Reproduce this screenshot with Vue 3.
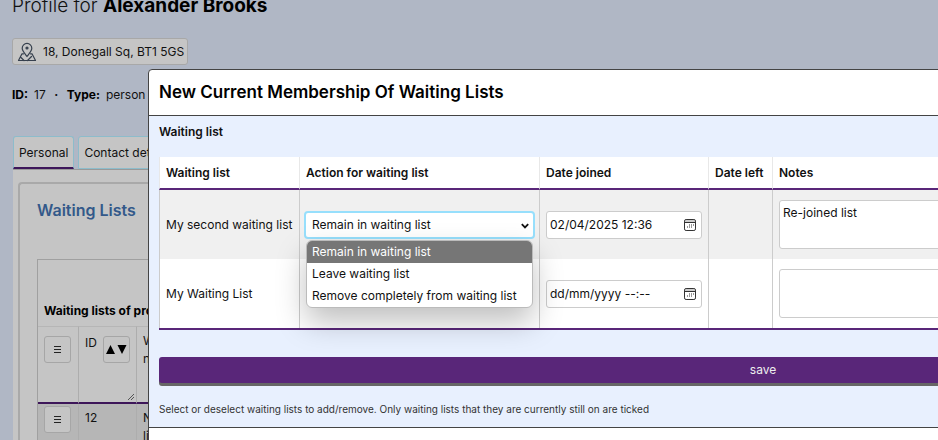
<script setup>
import { ref } from 'vue'

const options = [
  'Remain in waiting list',
  'Leave waiting list',
  'Remove completely from waiting list',
]
const action = ref(options[0])
const rows = ref([
  { id: 1, name: 'My second waiting list', joined: '02/04/2025 12:36', notes: 'Re-joined list', open: true },
  { id: 2, name: 'My Waiting List', joined: '', notes: '', open: false },
])
</script>

<template>
  <div class="screen">
    <main class="profile">
      <h1>Profile for <b>Alexander Brooks</b></h1>
      <button class="address" type="button">
        <svg viewBox="0 0 20 20" width="20" height="20" fill="none" stroke="#36404e" stroke-width="1.2" stroke-linejoin="round" stroke-linecap="round">
          <path d="M10 14.500C8 11.500 5.200 9 5.200 6.200a4.800 4.800 0 0 1 9.600 0C14.800 9 12 11.500 10 14.500z" />
          <circle cx="10" cy="6" r="1" fill="#36404e" />
          <path d="M6.500 11.800H5L1.500 18.500h17L15 11.800h-1.500M4 15.500l3 3M14.500 14.500l-4 4" />
        </svg>
        18, Donegall Sq, BT1 5GS
      </button>
      <p class="meta"><b>ID:</b> <span>17</span> <span class="dot">·</span> <b>Type:</b> <span>person</span></p>
      <nav class="tabs">
        <a href="#personal" class="tab active">Personal</a>
        <a href="#contact" class="tab">Contact details</a>
      </nav>
      <section class="panel">
        <div class="card">
          <h2>Waiting Lists</h2>
          <div class="listing">
            <table class="summary">
              <caption>Waiting lists of profile</caption>
              <thead>
                <tr>
                  <th class="tool">
                    <button type="button" aria-label="Menu">
                      <svg viewBox="0 0 7 9" width="7" height="9" stroke="#222"><path d="M0 1.500h7M0 4.500h7M0 7.500h7" /></svg>
                    </button>
                  </th>
                  <th class="num">
                    <div class="sort"><span>ID</span><button type="button" aria-label="Sort">
                      <svg viewBox="0 0 22 9" width="22" height="9" fill="#000"><path d="M1 9 5.500 0 10 9zM12.500 0h9L17 9z" /></svg>
                    </button></div>
                    <svg class="grip" viewBox="0 0 8 8" width="8" height="8" stroke="#555" fill="none"><path d="M1 7 7 1M4 7l3-3" /></svg>
                  </th>
                  <th class="wl">Waiting list<br />name</th>
                </tr>
              </thead>
              <tbody>
                <tr>
                  <td class="tool">
                    <button type="button" aria-label="Row menu">
                      <svg viewBox="0 0 7 9" width="7" height="9" stroke="#222"><path d="M0 1.500h7M0 4.500h7M0 7.500h7" /></svg>
                    </button>
                  </td>
                  <td class="num">12</td>
                  <td>New waiting<br />list</td>
                </tr>
              </tbody>
            </table>
          </div>
        </div>
      </section>
    </main>

    <div class="dialog" role="dialog" aria-labelledby="dialog-title">
      <header><h2 id="dialog-title">New Current Membership Of Waiting Lists</h2></header>
      <form class="content" @submit.prevent>
        <h3>Waiting list</h3>
        <table class="lists">
          <colgroup>
            <col class="c-name" /><col class="c-action" /><col class="c-joined" /><col class="c-left" /><col />
          </colgroup>
          <thead>
            <tr>
              <th>Waiting list</th>
              <th>Action for waiting list</th>
              <th>Date joined</th>
              <th>Date left</th>
              <th>Notes</th>
            </tr>
          </thead>
          <tbody>
            <tr v-for="row in rows" :key="row.id">
              <td>{{ row.name }}</td>
              <td class="action">
                <div v-if="row.open" class="picker">
                  <select v-model="action" aria-label="Action for waiting list">
                    <option v-for="o in options" :key="o">{{ o }}</option>
                  </select>
                  <svg class="chevron" viewBox="0 0 8 6" width="8" height="6" fill="none" stroke="#111" stroke-width="1.8"><path d="M.8 1.200 4 4.400 7.200 1.200" /></svg>
                  <ul class="menu">
                    <li v-for="o in options" :key="o" :class="{ on: o === action }">{{ o }}</li>
                  </ul>
                </div>
              </td>
              <td>
                <div class="date">
                  <input v-model="row.joined" type="text" placeholder="dd/mm/yyyy --:--" aria-label="Date joined" />
                  <button type="button" aria-label="Open calendar">
                    <svg viewBox="0 0 12 12" width="12" height="12" fill="none" stroke="#333">
                      <rect x=".5" y=".5" width="11" height="11" rx="1.600" />
                      <path d="M1 3.500h10" />
                      <path d="M5 6h1M7 6h1M9 6h1M3 8h1M5 8h1M7 8h1" />
                      <path d="M1 2h10" stroke="#999" />
                    </svg>
                  </button>
                </div>
              </td>
              <td></td>
              <td><textarea v-model="row.notes" aria-label="Notes"></textarea></td>
            </tr>
          </tbody>
        </table>
        <button class="save" type="submit">save</button>
        <p class="hint">Select or deselect waiting lists to add/remove. Only waiting lists that they are currently still on are ticked</p>
      </form>
    </div>
  </div>
</template>

<style>
body { margin: 0; background: #b0b7c5; overflow: hidden; }
</style>

<style scoped>
* { box-sizing: border-box; }
.screen {
  position: relative;
  height: 100vh;
  overflow: hidden;
  font: 12px/18px Inter, "Noto Sans", sans-serif;
  color: #111;
}
button, input, select, textarea { font: inherit; color: inherit; margin: 0; }
h1, h2, h3, p, ul { margin: 0; padding: 0; }
ul { list-style: none; }

.profile { padding-left: 12px; margin-top: -8px; }
h1 { font-size: 19px; line-height: 28px; font-weight: 300; }
h1 b { font-weight: 700; color: #000; }
.address {
  display: flex;
  align-items: center;
  gap: 6px;
  height: 27px;
  margin-top: 18px;
  padding: 0 3px 0 4px;
  border: 1px solid #a8a8a8;
  border-radius: 3px;
  background: #c5c5c5;
}
.meta { display: flex; gap: 6px; margin-top: 21px; }
.meta b { color: #000; }
.meta .dot { width: 9px; text-align: center; font-weight: 700; }
.tabs { display: flex; gap: 4px; margin: 32px 0 0 1px; }
.tab {
  height: 33px;
  padding: 6px 5px;
  border: 1px solid #8dbccb;
  border-radius: 3px 3px 0 0;
  background: #c5c5c5;
  color: #111;
  text-decoration: none;
  line-height: 20px;
}
.tab.active { border-bottom: 2px solid #3d1659; }
.panel {
  margin-left: 1px;
  padding: 12px 0 0 5px;
  border-top: 1px solid #999;
  background: #c5c5c5;
}
.card { padding: 15px 17px 0; border: 2px solid #a9a9a9; border-right: 0; border-radius: 4px 0 0 0; }
.card h2 { font-size: 16px; line-height: 22px; font-weight: 600; color: #33598a; }
.listing { margin-top: 38px; border: 1px solid #a0a0a0; padding-top: 42px; }
.summary { border-collapse: separate; border-spacing: 0; table-layout: fixed; width: 100%; }
.summary caption { padding: 0 6px 6px; text-align: left; font-weight: 700; color: #000; }
.summary th, .summary td {
  padding: 5px 6px;
  border-left: 1px solid #adadad;
  vertical-align: top;
  text-align: left;
  font-weight: 400;
}
.summary th { position: relative; height: 78px; border-top: 1px solid #b6b6b6; border-bottom: 2px solid #3d1659; }
.summary td { height: 60px; background: #b6b6b6; }
.summary .tool { width: 40px; border-left: 0; }
.summary .num { width: 58px; }
.summary button {
  display: flex;
  align-items: center;
  justify-content: center;
  width: 27px;
  height: 27px;
  padding: 0;
  border: 1px solid #a6a6a6;
  border-radius: 3px;
  background: #c5c5c5;
}
.summary th.tool, .summary th.num { padding-top: 9px; }
.summary td.tool { padding-top: 2px; }
.sort { display: flex; gap: 6px; }
.sort span { line-height: 14px; }
.grip { position: absolute; right: 1px; bottom: 1px; }

.dialog {
  position: absolute;
  top: 69px;
  left: 148px;
  right: -440px;
  bottom: -20px;
  border: 1px solid #444;
  border-radius: 4px;
  background: #fff;
}
.dialog header { padding: 9px 10px 10px; border-bottom: 1px solid #444; }
.dialog header h2 { font-size: 17px; line-height: 26px; font-weight: 600; color: #000; }
.content { padding: 7px 10px 10px; background: #e8f0fe; border-bottom: 1px solid #444; }
.content h3 { font-size: 12px; line-height: 18px; font-weight: 600; }
.lists { width: 100%; margin-top: 16px; border-spacing: 0; table-layout: fixed; background: #fff; border-bottom: 2px solid #592679; }
.c-name { width: 140px; }
.c-action { width: 240px; }
.c-joined { width: 169px; }
.c-left { width: 64px; }
.lists th, .lists td { padding: 0 6px; border-left: 1px solid #ccc; text-align: left; white-space: nowrap; }
.lists th { height: 33px; border-left-color: #e8e8e8; border-bottom: 2px solid #592679; font-weight: 600; }
.lists td { height: 69px; }
.lists tbody tr:first-child td { background: #f0f0f0; }
.lists .action { padding: 0 4px; }
.picker { position: relative; }
.picker select {
  display: block;
  width: 100%;
  height: 28px;
  padding: 0 6px;
  border: 2px solid #97dffc;
  border-radius: 4px;
  background: #fff;
  appearance: none;
  outline: 0;
}
.chevron { position: absolute; right: 6px; top: 12px; }
.menu {
  position: absolute;
  z-index: 1;
  top: 29px;
  left: 2px;
  right: 2px;
  border: 1px solid #bbb;
  border-radius: 6px;
  background: #fff;
  overflow: hidden;
  box-shadow: 0 14px 30px rgba(0, 0, 0, 0.25);
}
.menu li { padding: 0 5px; line-height: 22px; }
.menu .on { background: #767676; color: #fff; }
.date {
  display: flex;
  align-items: center;
  width: 156px;
  height: 28px;
  padding: 0 5px 0 3px;
  border: 1px solid #ccc;
  border-radius: 3px;
  background: #fff;
}
.date input { flex: 1; min-width: 0; padding: 0; border: 0; background: none; outline: 0; }
.date input::placeholder { color: #111; opacity: 1; }
.date button { display: flex; padding: 0; border: 0; background: none; }
textarea {
  display: block;
  width: 100%;
  height: 49px;
  padding: 3px;
  border: 1px solid #ccc;
  border-radius: 3px;
  background: #fff;
  resize: none;
}
.save {
  display: block;
  width: 100%;
  height: 26px;
  margin-top: 27px;
  padding: 0;
  border: 0;
  border-radius: 3px;
  background: #592679;
  color: #eee;
  box-shadow: 0 3px 0 #666;
}
.hint { margin-top: 18px; font-size: 10px; line-height: 16px; color: #333; }
</style>
